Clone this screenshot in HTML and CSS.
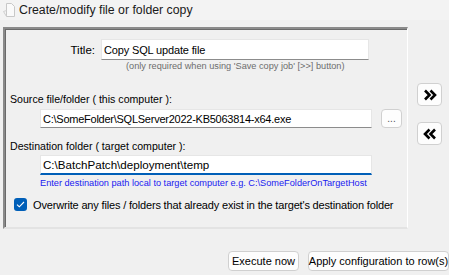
FILE: index.html
```html
<!DOCTYPE html>
<html>
<head>
<meta charset="UTF-8"/>
<title>Create/modify file or folder copy</title>
<link rel="stylesheet" href="styles.css">
</head>
<body>
<div class="header">
	<svg class="doc-icon" width="14" height="16" viewBox="0 0 14 16">
		<path d="M4.5 1.5h5l3 3v10h-8z" fill="#fafafa" stroke="#c8c8c8"/>
		<path d="M1.5 9.5l3 5M1.5 9.5l3 -1" fill="none" stroke="#d0d0d0"/>
	</svg>
	<span class="caption">Create/modify file or folder copy</span>
</div>

<div class="main">
	<div class="panel">
		<div class="row-title">
			<label class="lbl-title">Title:</label>
			<div class="field field-title">Copy SQL update file</div>
		</div>
		<div class="note">(only required when using 'Save copy job' [&gt;&gt;] button)</div>

		<div class="lbl-block lbl-source">Source file/folder ( this computer ):</div>
		<div class="row-source">
			<div class="field field-path field-src">C:\SomeFolder\SQLServer2022-KB5063814-x64.exe</div>
			<button class="btn btn-browse">...</button>
		</div>

		<div class="lbl-block lbl-dest">Destination folder ( target computer ):</div>
		<div class="field field-path field-focus">C:\BatchPatch\deployment\temp</div>
		<div class="hint">Enter destination path local to target computer e.g. C:\SomeFolderOnTargetHost</div>

		<div class="row-check">
			<span class="check">
				<svg width="9" height="7" viewBox="0 0 9 7"><path d="M1 3.6l2.3 2.2L8 1" fill="none" stroke="#fff" stroke-width="1.1"/></svg>
			</span>
			<span class="check-text">Overwrite any files / folders that already exist in the target's destination folder</span>
		</div>
	</div>

	<div class="side">
		<button class="btn btn-arrow">
			<svg width="14" height="12" viewBox="0 0 14 12"><path d="M2 1.5l4.5 4.5L2 10.5M7.5 1.5L12 6l-4.5 4.5" fill="none" stroke="#000" stroke-width="2.6"/></svg>
		</button>
		<button class="btn btn-arrow">
			<svg width="14" height="12" viewBox="0 0 14 12"><path d="M12 1.5L7.5 6l4.5 4.5M6.5 1.5L2 6l4.5 4.5" fill="none" stroke="#000" stroke-width="2.6"/></svg>
		</button>
	</div>
</div>

<div class="footer">
	<button class="btn btn-action btn-exec">Execute now</button>
	<button class="btn btn-action btn-apply">Apply configuration to row(s)</button>
</div>
</body>
</html>
```

FILE: styles.css
```css
body{
	margin:0;
	background:#f0f0f0;
	font-family:"Liberation Sans", Arial, sans-serif;
	font-size:11px;
	color:#000;
	width:449px;
	height:275px;
	overflow:hidden;
}
.header{
	height:20px;
	background:#f3f3f3;
	display:flex;
	align-items:center;
	padding-left:2px;
}
.doc-icon{
	margin-right:3px;
}
.caption{
	font-size:12.3px;
	color:#1a1a1a;
}
.main{
	display:flex;
	padding-top:7px;
	padding-left:3px;
}
.panel{
	width:402px;
	height:198px;
	border-top:2px solid #8a8a8a;
	border-left:2px solid #8a8a8a;
	border-right:1px solid #ffffff;
	border-bottom:2px solid #e3e3e3;
	box-shadow:inset 1px 1px 0 #6a6a6a;
	background:#f0f0f0;
}
.row-title{
	display:flex;
	align-items:center;
	margin-top:10px;
}
.lbl-title{
	width:90px;
	text-align:right;
	margin-right:6px;
	font-size:11.5px;
}
.field{
	background:#fff;
	border:1px solid #e6e6e6;
	border-bottom:1px solid #8c8c8c;
	box-sizing:border-box;
	padding-left:2px;
	display:flex;
	align-items:center;
	white-space:nowrap;
	overflow:hidden;
}
.field-title{
	width:268px;
	height:21px;
	font-size:11px;
	letter-spacing:-0.15px;
}
.note{
	font-size:9.2px;
	color:#6d6d6d;
	margin-top:1px;
	padding-left:121px;
	height:12px;
}
.lbl-block{
	padding-left:5px;
	height:14px;
	line-height:14px;
	font-size:10.6px;
}
.lbl-source{
	margin-top:19px;
}
.row-source{
	display:flex;
	align-items:center;
	margin-top:3px;
}
.field-path{
	width:332px;
	height:19px;
	margin-left:35px;
	font-size:11.6px;
}
.field-src{
	font-size:11px;
	letter-spacing:-0.25px;
}
.btn{
	background:#fdfdfd;
	border:1px solid #d0d0d0;
	border-radius:4px;
	font-family:"Liberation Sans", Arial, sans-serif;
	font-size:11px;
	color:#000;
	padding:0;
	display:flex;
	align-items:center;
	justify-content:center;
	box-sizing:border-box;
	white-space:nowrap;
}
.btn-browse{
	width:21px;
	height:19px;
	margin-left:9px;
	font-size:10px;
	color:#555;
}
.lbl-dest{
	margin-top:11px;
}
.field-focus{
	margin-top:2px;
	height:20px;
	border-bottom:2px solid #005fb8;
}
.hint{
	font-size:9.2px;
	color:#1a1af0;
	padding-left:35px;
	margin-top:3px;
	height:11px;
}
.row-check{
	display:flex;
	align-items:center;
	margin-top:9px;
	padding-left:9px;
}
.check{
	width:13px;
	height:13px;
	border-radius:3px;
	background:#005fb8;
	display:flex;
	align-items:center;
	justify-content:center;
	margin-right:6px;
}
.check-text{
	font-size:11px;
	letter-spacing:-0.17px;
	white-space:nowrap;
}
.side{
	display:flex;
	flex-direction:column;
	gap:16px;
	padding-left:9px;
	padding-top:56px;
}
.btn-arrow{
	width:25px;
	height:23px;
}
.footer{
	display:flex;
	gap:9px;
	padding-left:228px;
	padding-top:22px;
}
.btn-action{
	height:20px;
}
.btn-exec{
	width:71px;
}
.btn-apply{
	width:141px;
}
```
